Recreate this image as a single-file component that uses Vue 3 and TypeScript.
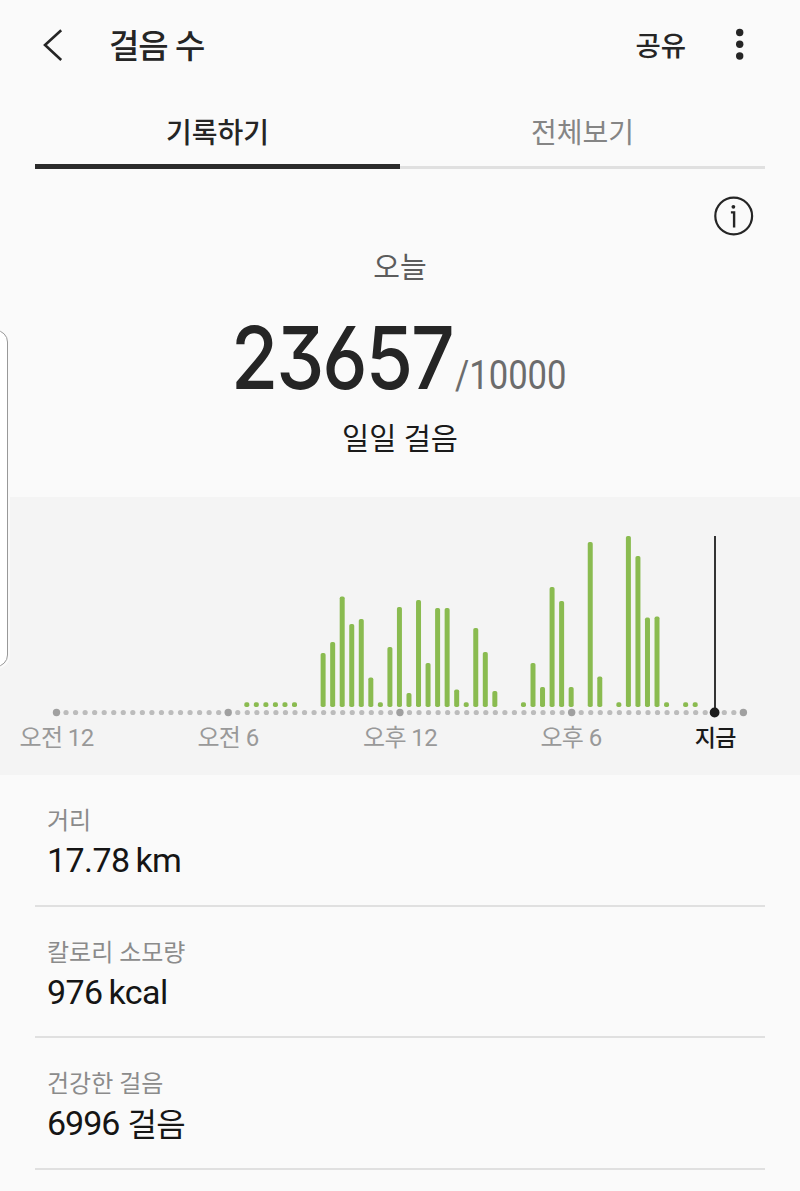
<script setup lang="ts">
interface Bar { slot: number; top: number }
interface AxisLabel { x: number; text: string; now?: boolean }
interface Stat { label: string; value: string; unit: string; korean?: boolean }

const ORIGIN = 56.5
const STEP = 9.54
const BASE = 210

const slotX = (slot: number): number => ORIGIN + slot * STEP

const tiny = [20, 21, 22, 23, 24, 25, 34, 43, 49, 59, 64, 66, 67]
const tall: [number, number][] = [
  [28, 156], [29, 145], [30, 99.5], [31, 127], [32, 122], [33, 180.5],
  [35, 150], [36, 110], [37, 196], [38, 103], [39, 166], [40, 111], [41, 111], [42, 192.5],
  [44, 131], [45, 155], [46, 194],
  [50, 166], [51, 190], [52, 90], [53, 104], [54, 190], [56, 45], [57, 179.5],
  [60, 39], [61, 59], [62, 120.5], [63, 119.5],
]
const bars: Bar[] = [
  ...tiny.map((slot) => ({ slot, top: 205.3 })),
  ...tall.map(([slot, top]) => ({ slot, top })),
]

const dots = Array.from({ length: 73 }, (_, slot) => ({
  x: slotX(slot),
  major: slot % 18 === 0,
}))

const labels: AxisLabel[] = [
  { x: 56.5, text: '오전 12' },
  { x: 228, text: '오전 6' },
  { x: 400, text: '오후 12' },
  { x: 571, text: '오후 6' },
  { x: 715.2, text: '지금', now: true },
]

const stats: Stat[] = [
  { label: '거리', value: '17.78', unit: 'km' },
  { label: '칼로리 소모량', value: '976', unit: 'kcal' },
  { label: '건강한 걸음', value: '6996', unit: '걸음', korean: true },
]
</script>

<template>
  <main class="screen">
    <header class="bar">
      <svg class="back" width="24" height="34" viewBox="0 0 24 34">
        <path d="M19.2 2.2 3 17l16.2 15" fill="none" stroke="#252525" stroke-width="2.6" />
      </svg>
      <h1 class="title">걸음 수</h1>
      <span class="share">공유</span>
      <svg class="more" width="12" height="34" viewBox="0 0 12 34">
        <circle cx="5.7" cy="4.5" r="3.7" /><circle cx="5.7" cy="16.3" r="3.7" /><circle cx="5.7" cy="28" r="3.7" />
      </svg>
    </header>

    <nav class="tabs">
      <span class="tab active">기록하기</span>
      <span class="tab">전체보기</span>
    </nav>

    <section class="summary">
      <svg class="info" width="42" height="42" viewBox="0 0 42 42">
        <circle cx="20.7" cy="21" r="18.4" fill="none" stroke="#252525" stroke-width="2.2" />
        <circle cx="20.4" cy="11.8" r="1.9" fill="#252525" />
        <path d="M17.9 17.4h3.2v15" fill="none" stroke="#252525" stroke-width="2.4" />
      </svg>
      <p class="day">오늘</p>
      <div class="count">
        <span class="steps"><span class="squeeze">23657</span></span>
        <span class="goal"><span class="squeeze">/10000</span></span>
      </div>
      <p class="caption">일일 걸음</p>
    </section>

    <svg class="chart" width="800" height="278" viewBox="0 0 800 278">
      <rect
        v-for="b in bars" :key="b.slot" class="step-bar"
        :x="slotX(b.slot) - 3" :y="b.top" width="5" :height="BASE - b.top" rx="1.8"
      />
      <circle
        v-for="d in dots" :key="d.x" :cx="d.x" cy="215.5"
        :r="d.major ? 3.7 : 2.6" :class="d.major ? 'dot-major' : 'dot'"
      />
      <rect x="714" y="39" width="2" height="176" fill="#333" />
      <circle cx="714.6" cy="215.5" r="4.9" fill="#1c1c1c" />
      <text
        v-for="l in labels" :key="l.text" :x="l.x" y="249" text-anchor="middle"
        class="axis" :class="{ now: l.now }"
      >{{ l.text }}</text>
    </svg>

    <section class="stats">
      <div v-for="s in stats" :key="s.label" class="stat">
        <div class="stat-label">{{ s.label }}</div>
        <div class="stat-value" :class="{ korean: s.korean }">
          <span class="num">{{ s.value }}</span><span class="unit">{{ s.unit }}</span>
        </div>
      </div>
    </section>

    <aside class="edge-panel"></aside>
  </main>
</template>

<style>
body { margin: 0; background: #fafafa; }
</style>

<style scoped>
.screen {
  position: relative;
  width: 800px;
  height: 1191px;
  overflow: hidden;
  background: #fafafa;
  color: #252525;
  font-family: Roboto, "Noto Sans CJK KR", sans-serif;
}
.bar {
  display: flex;
  align-items: center;
  box-sizing: border-box;
  height: 90px;
  padding: 0 54px 0 42px;
}
.title {
  flex: 1;
  margin: 0 0 0 43px;
  padding-top: 3px;
  font-size: 33px;
  font-weight: 500;
  line-height: 40px;
  letter-spacing: -1px;
}
.share { font-size: 27.5px; font-weight: 500; line-height: 40px; margin-right: 48px; padding-top: 4px; }
.more { fill: #252525; }
.tabs { display: flex; height: 79px; margin: 0 35px; }
.tab {
  flex: 1;
  box-sizing: border-box;
  border-bottom: 3px solid #e0e0e0;
  text-align: center;
  font-size: 28px;
  line-height: 87px;
  color: #858585;
}
.tab.active { border-bottom: 5px solid #2b2b2b; color: #252525; font-weight: 500; }
.summary { display: flex; flex-direction: column; height: 328px; align-items: center; }
.info { align-self: flex-end; margin: 26px 45px 0 0; }
.day { margin: 11px 0 0; font-size: 29px; line-height: 40px; color: #5c5c5c; }
.count { display: flex; align-items: flex-end; width: 334px; height: 90px; margin-top: 25px; }
.squeeze { display: block; transform-origin: 0 50%; white-space: nowrap; }
.steps {
  width: 224px;
  margin-left: -2px;
  font-family: Inter, Roboto, sans-serif;
  font-size: 87px;
  font-weight: 500;
  line-height: 90px;
  letter-spacing: -2.3px;
  font-feature-settings: "cv09", "cv03";
}
.steps .squeeze { transform: scaleX(0.88); }
.goal { width: 112px; font-size: 40px; line-height: 54px; color: #6c6c6c; }
.goal .squeeze { transform: scaleX(0.865); }
.caption { margin: 16px 0 0; font-size: 29.5px; line-height: 40px; color: #1a1a1a; }
.chart { display: block; background: #f4f4f4; }
.step-bar { fill: #8abb50; }
.dot { fill: #bcbcbc; }
.dot-major { fill: #a0a0a0; }
.axis { font-size: 24px; letter-spacing: -0.6px; fill: #999; }
.axis.now { fill: #1a1a1a; font-weight: 500; font-size: 23px; }
.stats { padding: 0 35px; }
.stat {
  box-sizing: border-box;
  height: 131.6px;
  padding: 28px 0 0 12px;
  border-bottom: 2px solid #e0e0e0;
}
.stat-label { font-size: 24px; line-height: 36px; color: #8b8b8b; }
.stat-value { display: flex; gap: 6px; font-size: 34px; line-height: 42px; letter-spacing: -0.6px; color: #151515; }
.korean { gap: 8px; }
.korean .num { letter-spacing: -1px; }
.korean .unit { font-size: 32px; padding-top: 2px; }
.edge-panel {
  position: absolute;
  left: -20px;
  top: 330px;
  width: 26px;
  height: 335px;
  border: 1px solid #999;
  border-radius: 0 12px 12px 0;
  background: #fff;
  box-shadow: 0 0 0 2px #fafafa;
}
</style>
